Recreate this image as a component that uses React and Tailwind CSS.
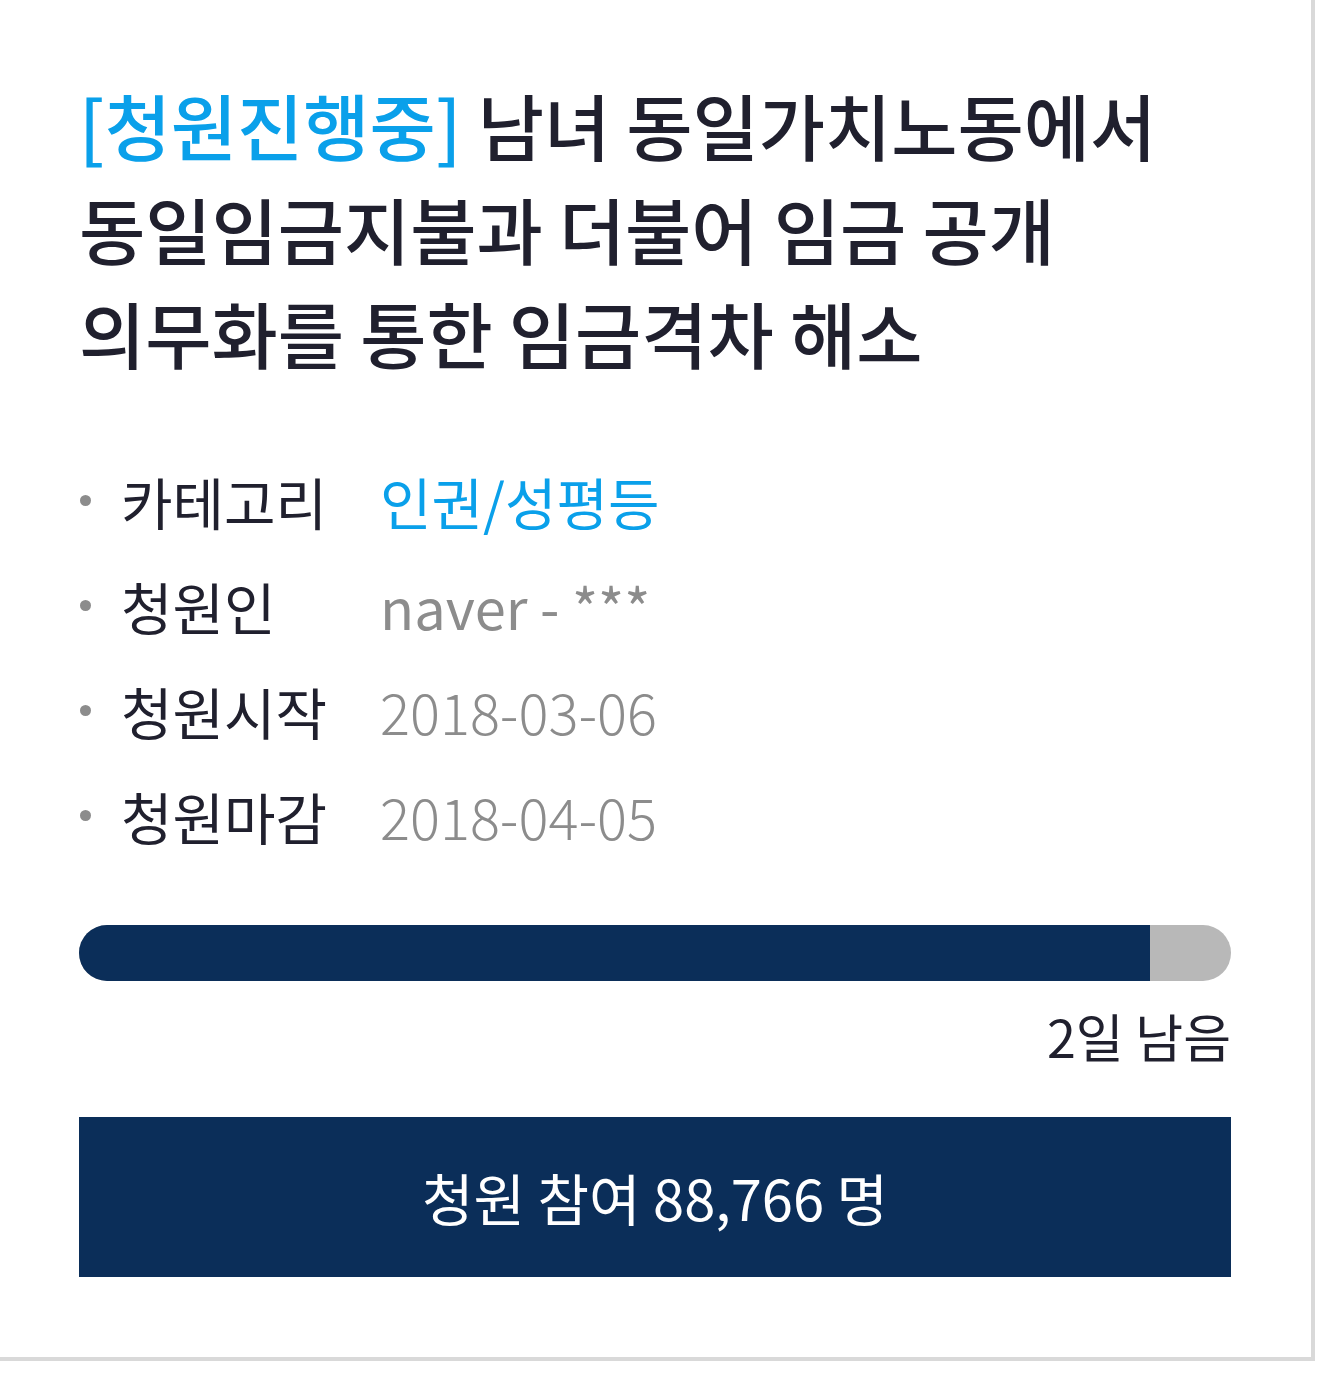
import React from "react";

const rows = [
  { label: "카테고리", value: "인권/성평등", tone: "blue" },
  { label: "청원인", value: "naver - ***", tone: "gray" },
  { label: "청원시작", value: "2018-03-06", tone: "date" },
  { label: "청원마감", value: "2018-04-05", tone: "date" },
];

const valueClass = {
  blue: "text-[#0aa0ea]",
  gray: "text-[#8c8c8c]",
  date: "text-[#8c8c8c] font-light",
};

export default function App() {
  const progress = 93;

  return (
    <div
      className="w-[1317px] h-[1375px] bg-white"
      style={{ fontFamily: '"Noto Sans CJK KR", "Noto Sans", sans-serif' }}
    >
      <div className="w-[1315px] border-r-4 border-b-4 border-[#d9d9d9] bg-white pl-[79px] pr-[80px] pt-[72px] pb-[80px]">
        {/* Title */}
        <h1 className="text-[72px] leading-[104px] font-medium text-[#20202e] break-keep">
          <span className="text-[#0aa0ea]">[청원진행중]</span> 남녀 동일가치노동에서
          동일임금지불과 더불어 임금 공개 의무화를 통한 임금격차 해소
        </h1>

        {/* Info list */}
        <ul className="mt-[64px] flex flex-col">
          {rows.map((row) => (
            <li key={row.label} className="flex items-center h-[105px] text-[56px]">
              <span className="w-[11px] h-[11px] rounded-full bg-[#8c8c8c] ml-[1px] mr-[30px] shrink-0" />
              <span className="w-[259px] shrink-0 text-[#20202e]">{row.label}</span>
              <span className={valueClass[row.tone]}>{row.value}</span>
            </li>
          ))}
        </ul>

        {/* Progress */}
        <div className="mt-[57px] h-[56px] w-full rounded-full bg-[#b8b8b8] overflow-hidden">
          <div className="h-full bg-[#0b2e59]" style={{ width: `${progress}%` }} />
        </div>
        <div className="mt-[15px] text-right text-[52px] leading-[80px] text-[#20202e]">2일 남음</div>

        {/* Join button */}
        <button className="mt-[41px] w-full h-[160px] bg-[#0b2e59] text-white text-[56px] flex items-center justify-center">
          청원 참여 88,766 명
        </button>
      </div>
    </div>
  );
}
